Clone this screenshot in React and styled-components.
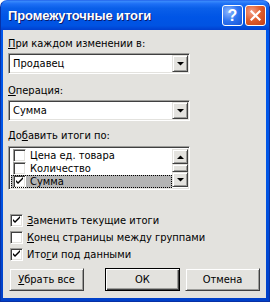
import React from "react";
import styled, { createGlobalStyle } from "styled-components";

const FACE = "#e3e2de";
const FONT = `"DejaVu Sans Condensed", "DejaVu Sans", sans-serif`;

const Global = createGlobalStyle`
  html, body { margin: 0; padding: 0; background: #ffffff; }
  body { font-family: ${FONT}; }
`;

const Window = styled.div`
  width: 270px;
  height: 302px;
  box-sizing: border-box;
  display: flex;
  flex-direction: column;
  background: linear-gradient(180deg, #0058ee 0%, #0055e5 60%, #0040c8 100%);
  border-radius: 7px 7px 0 0;
  overflow: hidden;
  border: 1px solid #0831a5;
  border-top: 1px solid #2a6ff0;
`;

const TitleBar = styled.div`
  height: 29px;
  flex: none;
  display: flex;
  align-items: center;
  padding: 0 3px 0 7px;
  background: linear-gradient(
    180deg,
    #3b8cfc 0%,
    #1d6ff5 10%,
    #0a5fe9 25%,
    #0055e6 55%,
    #0053e2 85%,
    #003fcf 100%
  );
`;

const Title = styled.div`
  flex: 1;
  color: #ffffff;
  font-family: "Liberation Sans", Arial, sans-serif;
  font-weight: bold;
  font-size: 13px;
  letter-spacing: -0.1px;
  text-shadow: 1px 1px 0 #0a1a6a;
`;

const CapButton = styled.div`
  width: 21px;
  height: 21px;
  box-sizing: border-box;
  margin-left: 2px;
  border: 1px solid #ffffff;
  border-radius: 3px;
  display: flex;
  align-items: center;
  justify-content: center;
  color: #ffffff;
  font-family: "Liberation Sans", Arial, sans-serif;
  font-weight: bold;
  font-size: 16px;
  background: ${(p) =>
    p.$close
      ? "radial-gradient(circle at 30% 30%, #f4a08a 0%, #e0602f 45%, #c33d15 100%)"
      : "radial-gradient(circle at 30% 30%, #8fb8ff 0%, #2e74f0 50%, #1553d6 100%)"};
`;

const Body = styled.div`
  flex: 1;
  margin: 0 3px 3px 2px;
  background: ${FACE};
  padding: 7px 0 0 5px;
  display: flex;
  flex-direction: column;
  color: #000;
  font-size: 11px;
`;

const Label = styled.div`
  height: 13px;
  line-height: 13px;
  margin-top: ${(p) => p.$mt || 0}px;
  white-space: nowrap;
`;

const U = styled.span`
  text-decoration: underline;
  text-underline-offset: 1px;
`;

const Sunken = styled.div`
  box-sizing: border-box;
  width: 182px;
  border-style: solid;
  border-width: 1px;
  border-color: #9d9d9a #ffffff #ffffff #9d9d9a;
  box-shadow: inset 1px 1px 0 #404040, inset -1px -1px 0 ${FACE};
  background: #ffffff;
  margin-top: ${(p) => p.$mt || 0}px;
`;

const Combo = styled(Sunken)`
  height: 21px;
  display: flex;
  align-items: stretch;
  padding: 1px;
`;

const ComboText = styled.div`
  flex: 1;
  padding-left: 3px;
  line-height: 17px;
`;

const Raised = styled.div`
  box-sizing: border-box;
  background: ${FACE};
  border-style: solid;
  border-width: 1px;
  border-color: ${FACE} #404040 #404040 ${FACE};
  box-shadow: inset 1px 1px 0 #ffffff, inset -1px -1px 0 #9d9d9a;
  display: flex;
  align-items: center;
  justify-content: center;
`;

const ArrowBtn = styled(Raised)`
  width: 16px;
  height: ${(p) => p.$h || 17}px;
  flex: none;
`;

const Tri = ({ up }) => (
  <svg width="7" height="4" viewBox="0 0 7 4">
    <path d={up ? "M0 4 L7 4 L3.5 0.5 Z" : "M0 0 L7 0 L3.5 3.5 Z"} fill="#000" />
  </svg>
);

const ListBox = styled(Sunken)`
  height: 44px;
  display: flex;
  padding: 2px 1px 2px 2px;
`;

const Items = styled.div`
  flex: 1;
  display: flex;
  flex-direction: column;
`;

const Item = styled.div`
  height: 14px;
  display: flex;
  align-items: center;
  box-sizing: border-box;
  padding-left: 2px;
  background: ${(p) => (p.$sel ? "#b4b4b4" : "transparent")};
  outline: ${(p) => (p.$sel ? "1px dotted #000" : "none")};
  outline-offset: -1px;
`;

const Scroll = styled.div`
  width: 16px;
  display: flex;
  flex-direction: column;
  background: #f1f0ee;
`;

const Thumb = styled(Raised)`
  flex: 1;
  margin: 0;
`;

const Box = styled.div`
  width: 13px;
  height: 13px;
  box-sizing: border-box;
  flex: none;
  border-style: solid;
  border-width: 1px;
  border-color: #9d9d9a #ffffff #ffffff #9d9d9a;
  box-shadow: inset 1px 1px 0 #404040, inset -1px -1px 0 ${FACE};
  background: #ffffff;
  display: flex;
  align-items: center;
  justify-content: center;
`;

const Check = () => (
  <svg width="9" height="9" viewBox="0 0 9 9">
    <path d="M1 3 L1 5 L3 7 L8 2 L8 0 L3 5 Z" fill="#000" />
  </svg>
);

const CheckBox = ({ on }) => <Box>{on && <Check />}</Box>;

const ItemText = styled.span`
  margin-left: 4px;
  line-height: 13px;
`;

const CheckRow = styled.div`
  height: 17px;
  display: flex;
  align-items: center;
  padding-left: 2px;
  margin-top: ${(p) => p.$mt || 0}px;
`;

const CheckLabel = styled.span`
  margin-left: 4px;
  white-space: nowrap;
`;

const Buttons = styled.div`
  display: flex;
  margin-top: 5px;
  padding-left: 1px;
`;

const Button = styled(Raised)`
  width: 75px;
  height: 23px;
  margin-left: ${(p) => p.$ml || 0}px;
  ${(p) =>
    p.$default &&
    `
    border: 1px solid #000;
    box-shadow: inset 1px 1px 0 #ffffff, inset -1px -1px 0 #404040, inset -2px -2px 0 #9d9d9a;
  `}
`;

export default function App() {
  return (
    <>
      <Global />
      <Window>
        <TitleBar>
          <Title>Промежуточные итоги</Title>
          <CapButton>?</CapButton>
          <CapButton $close>
            <svg width="11" height="11" viewBox="0 0 11 11">
              <path d="M1.5 1.5 L9.5 9.5 M9.5 1.5 L1.5 9.5" stroke="#fff" strokeWidth="2.2" strokeLinecap="square" />
            </svg>
          </CapButton>
        </TitleBar>
        <Body>
          <Label>
            <U>П</U>ри каждом изменении в:
          </Label>
          <Combo $mt={3}>
            <ComboText>Продавец</ComboText>
            <ArrowBtn>
              <Tri />
            </ArrowBtn>
          </Combo>
          <Label $mt={10}>
            <U>О</U>перация:
          </Label>
          <Combo $mt={3}>
            <ComboText>Сумма</ComboText>
            <ArrowBtn>
              <Tri />
            </ArrowBtn>
          </Combo>
          <Label $mt={8}>
            До<U>б</U>авить итоги по:
          </Label>
          <ListBox $mt={4}>
            <Items>
              <Item>
                <CheckBox />
                <ItemText>Цена ед. товара</ItemText>
              </Item>
              <Item>
                <CheckBox />
                <ItemText>Количество</ItemText>
              </Item>
              <Item $sel>
                <CheckBox on />
                <ItemText>Сумма</ItemText>
              </Item>
            </Items>
            <Scroll>
              <ArrowBtn $h={15}>
                <Tri up />
              </ArrowBtn>
              <Thumb />
              <ArrowBtn $h={15}>
                <Tri />
              </ArrowBtn>
            </Scroll>
          </ListBox>
          <CheckRow $mt={22}>
            <CheckBox on />
            <CheckLabel>
              <U>З</U>аменить текущие итоги
            </CheckLabel>
          </CheckRow>
          <CheckRow>
            <CheckBox />
            <CheckLabel>
              <U>К</U>онец страницы между группами
            </CheckLabel>
          </CheckRow>
          <CheckRow>
            <CheckBox on />
            <CheckLabel>
              Ито<U>г</U>и под данными
            </CheckLabel>
          </CheckRow>
          <Buttons>
            <Button>
              <U>У</U>брать все
            </Button>
            <Button $default $ml={21}>ОК</Button>
            <Button $ml={5}>Отмена</Button>
          </Buttons>
        </Body>
      </Window>
    </>
  );
}
